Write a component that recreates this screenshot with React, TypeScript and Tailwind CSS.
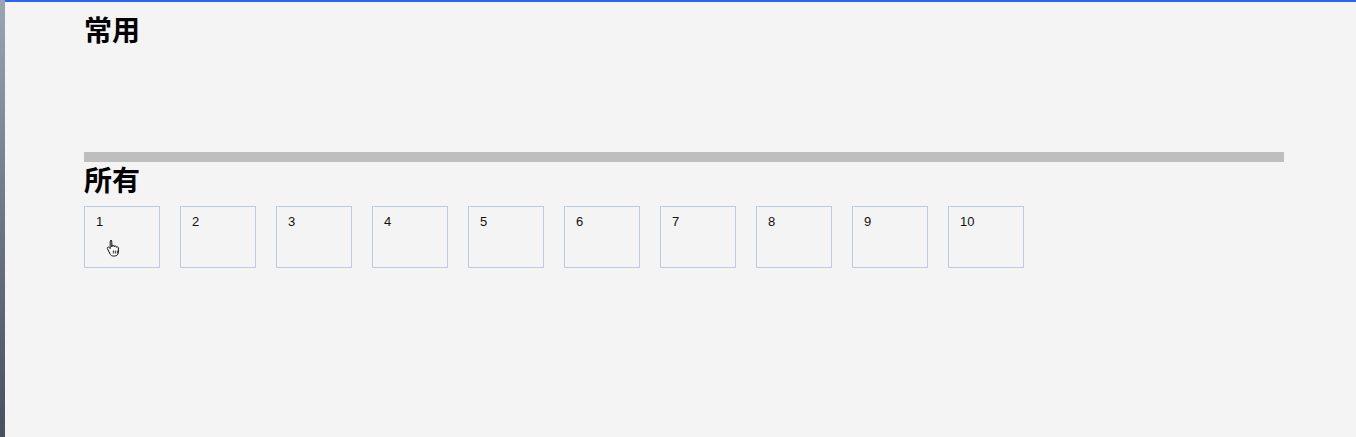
import React from "react";

const items = Array.from({ length: 10 }, (_, i) => i + 1);

function HandCursor() {
  return (
    <svg width="16" height="18" viewBox="0 0 16 18" className="absolute left-[21px] top-[32px]">
      <path
        d="M4.5 1.5c.8 0 1.3.6 1.3 1.3v5.2l.3-1.4c.6-.6 1.6-.4 1.9.3l.2.9.2-.6c.6-.6 1.6-.4 1.9.4l.1.7.3-.3c.6-.4 1.5-.1 1.7.7v4.4c0 2.2-1.5 3.9-3.6 3.9H7.2c-1.3 0-2.2-.6-2.9-1.6L1.4 9.6c-.4-.7.1-1.5.9-1.5.4 0 .8.2 1.1.5l.8 1V2.8c0-.7.5-1.3 1.3-1.3z"
        fill="#fff"
        stroke="#111"
        strokeWidth="1"
        strokeLinejoin="round"
      />
      <path d="M7.3 11.5v3M9.3 11.5v3M11.3 11.5v3" stroke="#111" strokeWidth="0.9" />
    </svg>
  );
}

export default function App() {
  return (
    <div className="flex h-[437px] w-[1356px] overflow-hidden bg-[#f4f4f4] font-['Liberation_Sans','Noto_Sans_CJK_SC',sans-serif]">
      <div className="w-[5px] shrink-0 bg-gradient-to-b from-[#9aa4b4] via-[#6d7688] to-[#48505e]" />
      <div className="flex-1 border-t-2 border-[#2b63f3]">
        <div className="ml-[79px] w-[1200px]">
          <h2 className="mt-[12px] text-[28px] font-bold leading-[36px] text-black">常用</h2>
          <div className="h-[102px]" />
          <div className="h-[10px] bg-[#bebebe]" />
          <h2 className="mt-[2px] text-[28px] font-bold leading-[36px] text-black">所有</h2>
          <div className="mt-[6px] flex gap-[20px]">
            {items.map((n) => (
              <div
                key={n}
                className="relative h-[62px] w-[76px] border border-[#bccbe0] px-[11px] pt-[7px] text-[13px] leading-[15px] text-[#111]"
              >
                {n}
                {n === 1 && <HandCursor />}
              </div>
            ))}
          </div>
        </div>
      </div>
    </div>
  );
}
